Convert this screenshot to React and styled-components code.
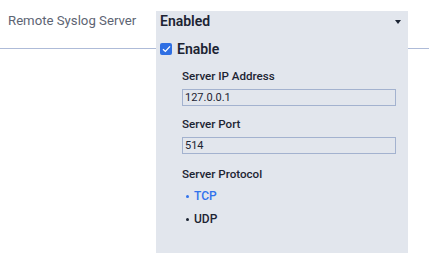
import React from "react";
import styled, { createGlobalStyle } from "styled-components";

const Global = createGlobalStyle`
  html, body { margin: 0; padding: 0; background: #ffffff; }
  body { font-family: Roboto, "Liberation Sans", sans-serif; width: 429px; height: 272px; overflow: hidden; }
`;

const Row = styled.div`
  display: flex;
  align-items: flex-start;
  width: 429px;
`;

const LabelCell = styled.div`
  width: 156px;
  height: 49px;
  box-sizing: border-box;
  border-bottom: 1px solid #aebbd8;
  padding: 12px 0 0 8px;
  font-size: 13.2px;
  line-height: 18px;
  color: #5d6473;
`;

const Filler = styled.div`
  flex: 1;
  height: 49px;
  box-sizing: border-box;
  border-bottom: 1px solid #aebbd8;
`;

const Panel = styled.div`
  margin-top: 11px;
  width: 252px;
  height: 242px;
  background: #e2e6ed;
  box-sizing: border-box;
  padding: 0 7px 0 4px;
  display: flex;
  flex-direction: column;
`;

const Header = styled.div`
  display: flex;
  align-items: center;
  justify-content: space-between;
  height: 20px;
  font-size: 14px;
  font-weight: 600;
  color: #1c2433;
`;

const Caret = styled.span`
  width: 0;
  height: 0;
  margin-top: 1px;
  border-left: 3.5px solid transparent;
  border-right: 3.5px solid transparent;
  border-top: 4px solid #1c2433;
`;

const CheckRow = styled.label`
  display: flex;
  align-items: center;
  gap: 5px;
  margin-top: 8px;
  height: 20px;
  font-size: 14px;
  font-weight: 600;
  color: #1c2433;
`;

const Box = styled.span`
  width: 12px;
  height: 12px;
  border-radius: 2px;
  background: #2f6fe3;
  display: flex;
  align-items: center;
  justify-content: center;
`;

const Fields = styled.div`
  padding-left: 22px;
  padding-right: 5px;
  display: flex;
  flex-direction: column;
`;

const FieldLabel = styled.div`
  font-size: 11.6px;
  font-weight: 500;
  color: #1c2433;
  height: 16px;
  line-height: 16px;
  margin-top: ${(p) => p.$mt}px;
`;

const Input = styled.div`
  margin-top: 5px;
  height: 17px;
  box-sizing: border-box;
  border: 1px solid #a3b2cf;
  font-size: 11px;
  line-height: 15px;
  padding-left: 2px;
  color: #1c2433;
`;

const Option = styled.div`
  display: flex;
  align-items: center;
  gap: 5px;
  padding-left: 4px;
  height: 16px;
  margin-top: ${(p) => p.$mt}px;
  font-size: 12px;
  font-weight: 500;
  color: ${(p) => (p.$active ? "#3173ec" : "#1c2433")};
`;

const Dot = styled.span`
  width: 3px;
  height: 3px;
  border-radius: 50%;
  background: currentColor;
`;

export default function App() {
  return (
    <>
      <Global />
      <Row>
        <LabelCell>Remote Syslog Server</LabelCell>
        <Panel>
          <Header>
            <span>Enabled</span>
            <Caret />
          </Header>
          <CheckRow>
            <Box>
              <svg width="9" height="8" viewBox="0 0 9 8">
                <path d="M1 4.2 L3.4 6.4 L8 1.4" fill="none" stroke="#fff" strokeWidth="1.3" />
              </svg>
            </Box>
            Enable
          </CheckRow>
          <Fields>
            <FieldLabel $mt={9}>Server IP Address</FieldLabel>
            <Input>127.0.0.1</Input>
            <FieldLabel $mt={10}>Server Port</FieldLabel>
            <Input>514</Input>
            <FieldLabel $mt={12}>Server Protocol</FieldLabel>
            <Option $active $mt={6}><Dot />TCP</Option>
            <Option $mt={7}><Dot />UDP</Option>
          </Fields>
        </Panel>
        <Filler />
      </Row>
    </>
  );
}
